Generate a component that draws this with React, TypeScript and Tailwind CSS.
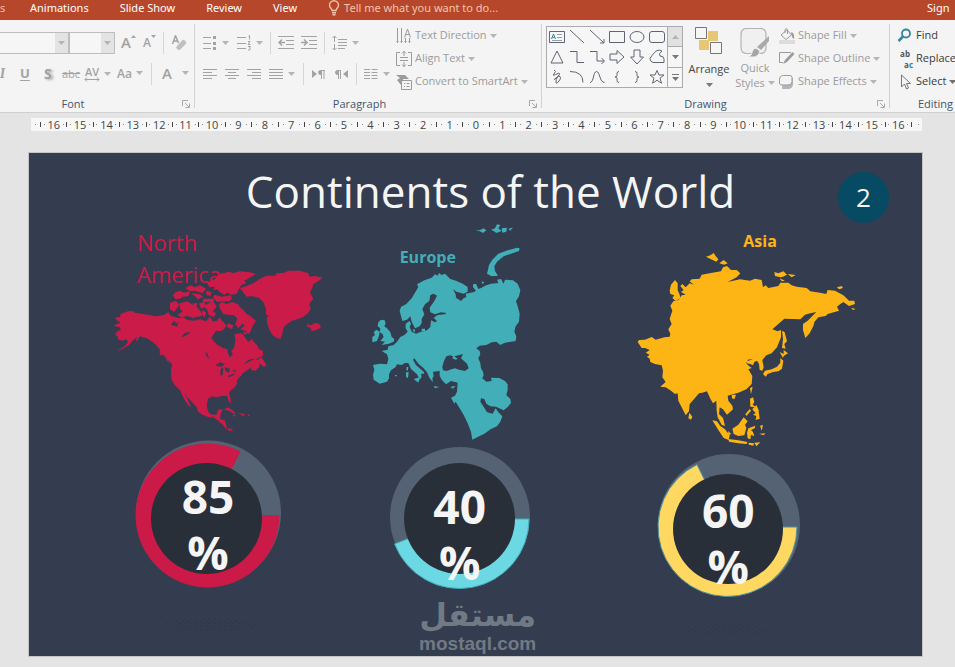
import React from 'react'
import clsx from 'clsx'

type Props = { children?: React.ReactNode; className?: string }

const Caret = ({ className }: Props): React.JSX.Element => (
  <svg viewBox="0 0 7 4" className={clsx('h-1 w-[7px] shrink-0 fill-current', className)} aria-hidden="true">
    <path d="M0 0h7L3.5 4z" />
  </svg>
)

const Icon = ({ children, className }: Props): React.JSX.Element => (
  <svg
    viewBox="0 0 16 16"
    className={clsx('h-4 w-4 shrink-0', className)}
    fill="none"
    stroke="currentColor"
    aria-hidden="true"
  >
    {children}
  </svg>
)

const Separator = ({ className }: Props): React.JSX.Element => (
  <span className={clsx('h-[22px] w-px shrink-0 bg-[#d6d6d6]', className)} />
)

type ToolProps = Props & { label: string; caret?: boolean }

const Tool = ({ label, caret, children, className }: ToolProps): React.JSX.Element => (
  <button
    type="button"
    aria-label={label}
    className={clsx('flex shrink-0 items-center text-[#a3a3a3]', caret && 'gap-1', className)}
  >
    {children}
    {caret && <Caret className="text-[#b4b4b4]" />}
  </button>
)

type TextToolProps = Props & { text: string; caret?: boolean }

const TextTool = ({ text, caret, children, className }: TextToolProps): React.JSX.Element => (
  <button type="button" className={clsx('flex h-[23px] items-center gap-[3px] whitespace-nowrap', className)}>
    {children}
    <span>{text}</span>
    {caret && <Caret className="opacity-70" />}
  </button>
)

type GroupProps = Props & { title: string; launcher?: boolean }

const Group = ({ title, launcher, children, className }: GroupProps): React.JSX.Element => (
  <section aria-label={title} className={clsx('flex shrink-0 flex-col', className)}>
    <div className="flex h-[76px]">{children}</div>
    <div className="flex h-4 items-center pr-1">
      <span className="flex-1 pr-3 text-center text-[#44546a]">{title}</span>
      {launcher && (
        <button type="button" aria-label={`${title} options`} className="text-[#a9a9a9]">
          <svg viewBox="0 0 8 8" className="h-2 w-2" fill="none" stroke="currentColor" aria-hidden="true">
            <path d="M.5 6V.5H6M3 3l4 4M7.5 3.5v4h-4" />
          </svg>
        </button>
      )}
    </div>
  </section>
)

const Divider = (): React.JSX.Element => <span className="my-1 w-px shrink-0 bg-[#d2d2d2]" />

const tabs = ['Animations', 'Slide Show', 'Review', 'View']

const TabBar = (): React.JSX.Element => (
  <nav className="flex h-5 items-center overflow-hidden bg-[#b7472a] pb-1 font-['Noto_Sans','Open_Sans',sans-serif] text-white">
    <a href="#transitions" className="w-[30px] shrink-0 text-[#e9c3b3]">
      s
    </a>
    <div className="flex flex-1 items-center gap-[31px]">
      {tabs.map((tab) => (
        <a key={tab} href={`#${tab}`} className="whitespace-nowrap">
          {tab}
        </a>
      ))}
      <button type="button" className="flex items-center gap-1 whitespace-nowrap text-[#f3c3ab]">
        <svg viewBox="0 0 12 16" className="h-4 w-3" fill="none" stroke="currentColor" strokeWidth="1.4" aria-hidden="true">
          <path d="M4 10.5C4 8.500 1.500 8 1.500 5.200a4.500 4.500 0 0 1 9 0C10.500 8 8 8.500 8 10.500zM4 12.700h4M4.500 14.800h3" />
        </svg>
        Tell me what you want to do...
      </button>
    </div>
    <a href="#signin" className="w-7 shrink-0 whitespace-nowrap">
      Sign
    </a>
  </nav>
)

const FontGroup = (): React.JSX.Element => (
  <Group title="Font" launcher className="-ml-6 w-[218px]">
    <div className="flex flex-col pt-[7px] pl-6">
      <div className="flex h-[31px] items-center">
        <div className="relative h-[22px] w-[69px] border border-l-0 border-[#bdbdbd]">
          <select aria-label="Font name" className="h-full w-full appearance-none bg-[#f6f6f6]" />
          <span className="pointer-events-none absolute inset-y-0 right-0 flex w-[13px] items-center justify-center bg-[#e3e3e3] text-[#b4b4b4]">
            <Caret />
          </span>
        </div>
        <div className="relative h-[22px] w-[46px] border border-[#bdbdbd]">
          <select aria-label="Font size" className="h-full w-full appearance-none bg-[#f6f6f6]" />
          <span className="pointer-events-none absolute inset-y-0 right-0 flex w-[13px] items-center justify-center bg-[#e3e3e3] text-[#b4b4b4]">
            <Caret />
          </span>
        </div>
        <div className="flex items-center gap-[7px] pl-1.5">
          <Tool label="Increase font size">
            <span className="text-[15px] font-semibold">A</span>
            <svg viewBox="0 0 5 3" className="mb-3 h-[3px] w-[5px] fill-current" aria-hidden="true">
              <path d="M0 3h5L2.500 0z" />
            </svg>
          </Tool>
          <Tool label="Decrease font size">
            <span className="text-[12px] font-semibold">A</span>
            <svg viewBox="0 0 5 3" className="mb-3 h-[3px] w-[5px] fill-current" aria-hidden="true">
              <path d="M0 0h5L2.500 3z" />
            </svg>
          </Tool>
          <Separator />
          <Tool label="Clear formatting">
            <Icon>
              <path d="M1.500 9L4.500.800 7.500 8M3 6h3.500" strokeWidth="1.500" />
              <path d="M5.500 11.500l6-6.500q1-.8 2 .2l1.500 1.500q.8 1 0 2l-6 6q-1 .8-2 0l-1.500-1.500q-.8-.9 0-1.700z" fill="#c0c0c0" stroke="none" />
            </Icon>
          </Tool>
        </div>
      </div>
      <div className="flex h-[31px] items-center text-sm">
        <Tool label="Italic" className="w-5">
          <i className="font-serif font-bold">I</i>
        </Tool>
        <Tool label="Underline" className="w-6">
          <span className="text-[13px] font-bold underline underline-offset-2">U</span>
        </Tool>
        <Tool label="Text shadow" className="w-[18px]">
          <b className="drop-shadow-[2px_1px_1px_#aaa]">S</b>
        </Tool>
        <Tool label="Strikethrough" className="w-[22px]">
          <span className="text-[11px] line-through">abc</span>
        </Tool>
        <Tool label="Character spacing" caret>
          <span className="flex flex-col items-center">
            <span className="text-[11px] leading-[11px] font-semibold">AV</span>
            <svg viewBox="0 0 16 5" className="h-[5px] w-4" fill="none" stroke="currentColor" aria-hidden="true">
              <path d="M1 2.500h14M3 .5l-2 2 2 2M13 .5l2 2-2 2" />
            </svg>
          </span>
        </Tool>
        <Tool label="Change case" caret className="ml-1.5">
          <span className="text-[12px] font-semibold">Aa</span>
        </Tool>
        <Separator className="mx-2" />
        <Tool label="Font colour" caret className="ml-0.5">
          <span className="w-4 text-left text-[15px] font-semibold">A</span>
        </Tool>
      </div>
    </div>
  </Group>
)

const ParagraphGroup = (): React.JSX.Element => (
  <Group title="Paragraph" launcher className="w-[346px] pl-[7px]">
    <div className="flex w-[194px] shrink-0 flex-col pt-[7px]">
      <div className="flex h-[31px] items-center gap-[7px]">
        <Tool label="Bullets" caret>
          <Icon>
            <path d="M1 2.500h8M1 8.500h8M1 13.500h8" />
            <path d="M11 1h3v3h-3zM11 7h3v3h-3zM11 12h3v3h-3z" fill="currentColor" stroke="none" />
          </Icon>
        </Tool>
        <Tool label="Numbering" caret>
          <Icon>
            <path d="M1 2.500h9M1 8.500h9M1 13.500h9M12.500 1l1-.5v4M12 6.500h2l-2 3h2.500M12 11.500h2.500l-1 1.500q1.500.5 0 2h-1.500" />
          </Icon>
        </Tool>
        <Separator />
        <Tool label="Decrease indent">
          <Icon>
            <path d="M0 1.500h16M8 5.500h8M8 9.500h8M0 13.500h16" />
            <path d="M7 7.500H1M4 4.500l-3 3 3 3" strokeWidth="1.500" />
          </Icon>
        </Tool>
        <Tool label="Increase indent">
          <Icon>
            <path d="M0 1.500h16M8 5.500h8M8 9.500h8M0 13.500h16" />
            <path d="M0 7.500h6M3 4.500l3 3-3 3" strokeWidth="1.500" />
          </Icon>
        </Tool>
        <Separator />
        <Tool label="Line spacing" caret>
          <Icon>
            <path d="M6 4.500h9M6 7.500h9M6 10.500h9M6 13.500h7M2.500 1v6M.5 3l2-2 2 2M2.500 9v6M.5 13l2 2 2-2" />
          </Icon>
        </Tool>
      </div>
      <div className="flex h-[31px] items-center gap-1.5">
        <Tool label="Align left">
          <Icon>
            <path d="M1 3.500h14M1 6.500h9M1 9.500h14M1 12.500h9" />
          </Icon>
        </Tool>
        <Tool label="Center">
          <Icon>
            <path d="M1 3.500h14M4 6.500h8M1 9.500h14M4 12.500h8" />
          </Icon>
        </Tool>
        <Tool label="Align right">
          <Icon>
            <path d="M1 3.500h14M6 6.500h9M1 9.500h14M6 12.500h9" />
          </Icon>
        </Tool>
        <Tool label="Justify" caret>
          <Icon>
            <path d="M1 3.500h14M1 6.500h14M1 9.500h14M1 12.500h14" />
          </Icon>
        </Tool>
        <Separator className="mx-0.5" />
        <Tool label="Left to right">
          <Icon>
            <path d="M0 4l5 4-5 4z" fill="currentColor" stroke="none" />
            <path d="M13 4.500H8.500a2 2 0 0 0 0 4H9V4.500zM9.500 4v9M12 4v9" fill="currentColor" />
          </Icon>
        </Tool>
        <Tool label="Right to left">
          <Icon>
            <path d="M14 4L9 8l5 4z" fill="currentColor" stroke="none" />
            <path d="M7 4.500H3.500a2 2 0 0 0 0 4H4V4.500zM4.500 4v9M6.500 4v9" fill="currentColor" />
          </Icon>
        </Tool>
        <Separator />
        <Tool label="Columns" caret>
          <Icon>
            <path d="M1 3.500h6M1 6.500h6M1 9.500h6M1 12.500h6M8.500 3.500h6M8.500 6.500h6M8.500 9.500h6M8.500 12.500h6" />
          </Icon>
        </Tool>
      </div>
    </div>
    <div className="flex flex-col items-start pt-1 text-[#9b9b9b]">
      <TextTool text="Text Direction" caret>
        <Icon>
          <path d="M1.500 0v15M5.500 0v15M9.500 10v5M13.500 10v5M.5 13.500h2M4.500 13.500h2M8.500 13.500h2M12.500 13.500h2M8.500 9.500L11.500 1l3 8.500M9.500 6.500h4" />
        </Icon>
      </TextTool>
      <TextTool text="Align Text" caret>
        <Icon>
          <path d="M4 1.500H.5v13H4M12 1.500h3.500v13H12M4 6.500h8M4 9.500h8M8 0v5M6 2.500l2-2 2 2M8 11v5M6 13.500l2 2 2-2" />
        </Icon>
      </TextTool>
      <TextTool text="Convert to SmartArt" caret>
        <Icon>
          <path d="M0 1h9l4 4H7v2H5v4L1 6l3-2z" fill="currentColor" stroke="none" />
          <path d="M5.500 6.500h10v9h-10zM8 9.500h1M10.500 9.500h3M8 12.500h1M10.500 12.500h3" />
        </Icon>
      </TextTool>
    </div>
  </Group>
)

const shapes: { name: string; d: string }[] = [
  { name: 'Line', d: 'M1 1l14 13' },
  { name: 'Arrow', d: 'M1 1l14 13M15 10v4h-4' },
  { name: 'Rectangle', d: 'M.5 2.500h15v11H.5z' },
  { name: 'Oval', d: 'M1 8a7 5.500 0 1 0 14 0a7 5.500 0 1 0-14 0' },
  { name: 'Rounded rectangle', d: 'M3 2.500h10a2.500 2.500 0 0 1 2.500 2.500v6a2.500 2.500 0 0 1-2.500 2.500H3A2.500 2.500 0 0 1 .5 11V5A2.500 2.500 0 0 1 3 2.500z' },
  { name: 'Triangle', d: 'M8 2l6 12H2z' },
  { name: 'Elbow connector', d: 'M1 2.500h7v11h7' },
  { name: 'Elbow arrow', d: 'M1 2.500h7v9.500h7M12.500 9l3 3-3 3' },
  { name: 'Right arrow', d: 'M1 5h7V1.500L15 8l-7 6.500V11H1z' },
  { name: 'Down arrow', d: 'M5 1v7H1.500L8 15l6.500-7H11V1z' },
  { name: 'Freeform', d: 'M5.500 3.500L8 1.500q3-1 5 .5-4 3-2 5 4 0 4 3v3.500H4q-3-1-3-4l2-3z' },
  { name: 'Scribble', d: 'M5 1q3 1 0 4t5-1q2 1-3 5t3-2q3 1 0 5t-3 1 1-4' },
  { name: 'Arc', d: 'M1 2.500q13 0 13 11' },
  { name: 'Curve', d: 'M1 13.500c4 0 3-11 6.500-11s3 11 8 11' },
  { name: 'Left brace', d: 'M10 2.500q-2 0-2 2v2q0 1.500-2 1.500 2 0 2 1.500v2q0 2 2 2' },
  { name: 'Right brace', d: 'M6 2.500q2 0 2 2v2q0 1.500 2 1.500-2 0-2 1.500v2q0 2-2 2' },
  { name: 'Star', d: 'M8 1.500l2 4.500h5l-4 3.200 1.500 5L8 11.300 3.500 14.200l1.500-5L1 6h5z' }
]

const DrawingGroup = (): React.JSX.Element => (
  <Group title="Drawing" launcher className="w-[347px] pl-1">
    <div className="mt-1.5 flex h-[62px] shrink-0 border border-[#ababab] bg-[#f6f6f6]">
      <div className="grid grid-cols-6 text-[#5f6673]">
        <button type="button" aria-label="Text box" className="flex w-5 items-center justify-center">
          <Icon>
            <path d="M.5 2.500h15v11H.5z" />
            <path d="M2.500 10l2-5 2 5M3.500 8.500h2" stroke="#31849b" />
            <path d="M8 5.500h5M8 8.500h5M3 11.500h10" stroke="#9aa0aa" />
          </Icon>
        </button>
        {shapes.map((shape) => (
          <button key={shape.name} type="button" aria-label={shape.name} className="flex w-5 items-center justify-center">
            <Icon>
              <path d={shape.d} />
            </Icon>
          </button>
        ))}
      </div>
      <div className="flex w-[15px] flex-col divide-y divide-[#ababab] border-l border-[#ababab] text-[#777]">
        <button type="button" aria-label="Scroll up" className="flex flex-1 items-center justify-center bg-[#e1e1e1] text-[#b4b4b4]">
          <Caret className="rotate-180" />
        </button>
        <button type="button" aria-label="Scroll down" className="flex flex-1 items-center justify-center">
          <Caret />
        </button>
        <button type="button" aria-label="More shapes" className="flex flex-1 flex-col items-center justify-center gap-0.5">
          <span className="h-px w-[7px] bg-current" />
          <Caret />
        </button>
      </div>
    </div>
    <button type="button" className="flex w-[52px] flex-col items-center pt-[7px] text-[#444]">
      <svg viewBox="0 0 28 28" className="h-7 w-7" aria-hidden="true">
        <path d="M13 4h10v10H13zM4 13h10v10H4z" fill="#e8c674" />
        <path d="M.5.500h11v11H.5zM15.500 15.500h11v11h-11z" fill="#f6f6f6" stroke="#777" />
      </svg>
      <span className="pt-1.5 leading-4">Arrange</span>
      <Caret className="mt-1.5 text-[#777]" />
    </button>
    <button type="button" className="flex w-10 flex-col items-center pt-2 text-[#9b9b9b]">
      <svg viewBox="0 0 30 30" className="h-[30px] w-[30px]" fill="none" stroke="#b4b4b4" aria-hidden="true">
        <path d="M7 .5h13q6 0 6 6v13q0 6-6 6H7q-6 0-6-6v-13q0-6 6-6z" strokeWidth="1.200" fill="#f0f0f0" />
        <path d="M29 8v5l-8 9-4-3z" fill="#aaa" stroke="none" />
        <path d="M16 20l4 3q-1 5-5 6H7q5-1 5-5 1-4 4-4z" fill="#a5a5a5" stroke="#f4f4f4" />
      </svg>
      <span className="pt-0.5 leading-[15px]">Quick</span>
      <span className="flex items-center gap-[3px] leading-4">
        Styles <Caret className="opacity-70" />
      </span>
    </button>
    <div className="flex flex-col items-start pt-1 pl-1 text-[#9b9b9b]">
      <TextTool text="Shape Fill" caret>
        <Icon>
          <path d="M0 12h16v4H0z" fill="#dcdcdc" stroke="none" />
          <path d="M2 7l6-5 4.500 5L7 11.500zM6 5V1.500q1-2 2.500 0V6" />
          <path d="M12 4q4 1 3 7-2-1-2.500-4z" fill="currentColor" stroke="none" />
        </Icon>
      </TextTool>
      <TextTool text="Shape Outline" caret>
        <Icon>
          <path d="M12 1.500H.5v10H4" />
          <path d="M13.500 1L15.500 3 8 11l-4 2 2-4z" fill="currentColor" stroke="none" />
        </Icon>
      </TextTool>
      <TextTool text="Shape Effects" caret>
        <Icon>
          <path d="M5 4h9v6q0 4-4 5H3q0-4 2-11z" fill="#b4b4b4" stroke="none" />
          <path d="M4.500 1.500H11q2 0 2 2v4q0 3.500-4 3.500H3Q.5 11 .5 9V6Q.5 1.500 4.500 1.500z" fill="#f4f4f4" />
        </Icon>
      </TextTool>
    </div>
  </Group>
)

const EditingGroup = (): React.JSX.Element => (
  <Group title="Editing" className="w-[100px] pl-[7px]">
    <div className="flex flex-col items-start pt-1 text-[#3b3b3b]">
      <TextTool text="Find">
        <Icon className="text-[#31849b]">
          <circle cx="9" cy="5.500" r="4" strokeWidth="1.800" />
          <path d="M6 8.500L1.500 13" strokeWidth="2.500" />
        </Icon>
      </TextTool>
      <TextTool text="Replace">
        <span className="grid w-4 text-[8px] leading-[11px] font-bold text-[#555]" aria-hidden="true">
          <span>ab</span>
          <span className="justify-self-end">
            a<span className="text-[#31849b]">c</span>
          </span>
        </span>
      </TextTool>
      <TextTool text="Select" caret>
        <Icon className="text-[#777]">
          <path d="M4.500 1v12l3-3 2 5 2-1-2-4.500h4z" />
        </Icon>
      </TextTool>
    </div>
  </Group>
)

const marks = Array.from({ length: 33 }, (_, i) => Math.abs(16 - i))

const Dot = (): React.JSX.Element => <i className="h-px w-px bg-[#888]" />
const Tick = (): React.JSX.Element => <i className="h-[5px] w-px bg-[#444]" />

const Ruler = (): React.JSX.Element => (
  <div className="mt-[5px] mr-[33px] ml-[31px] flex h-[13px] items-center bg-[#f7f7f7] pl-1 text-[#444]">
    <Dot />
    <div className="ml-1 flex flex-1">
      {marks.map((mark, i) => (
        <div key={i} className="flex h-[13px] flex-1 items-center justify-between leading-[13px]">
          <Tick />
          <Dot />
          <span>{mark}</span>
          <Dot />
          <i />
        </div>
      ))}
    </div>
    <Tick />
    <i className="w-1.5" />
    <Dot />
    <i className="w-[3px]" />
  </div>
)

const NorthAmerica = (): React.JSX.Element => (
  <svg viewBox="36 126 636 504" className="-mt-6 ml-[83px] h-[168px] w-[212px]" fill="#cb1a48" aria-hidden="true">
    {/* breaks the straight edges into a ragged coastline */}
    <filter id="coast" x="0" y="0" width="1" height="1">
      <feTurbulence type="fractalNoise" baseFrequency="0.2" numOctaves="2" seed="4" />
      <feDisplacementMap in="SourceGraphic" scale="5" xChannelSelector="R" yChannelSelector="G" />
    </filter>
    <g filter="url(#coast)">
      <path d="M62 270L84 262 100 262 104 266 118 268 130 270 168 277 190 274 205 265 212 275 236 282 250 280 262 288 285 290 300 286 318 292 330 278 338 292 352 290 358 280 372 296 380 304 372 316 362 322 348 320 338 335 334 342 340 350 352 362 368 372 382 376 384 388 390 400 398 392 394 380 402 372 406 352 404 330 425 328 432 335 440 348 446 354 456 345 462 355 470 362 478 376 488 380 490 390 485 398 470 404 452 405 440 412 432 422 445 414 465 404 472 408 484 400 492 410 500 425 490 428 478 418 478 430 466 440 452 438 455 430 440 440 428 448 424 455 412 466 410 480 404 490 392 500 387 508 392 524 393 537 386 532 382 516 368 515 350 520 335 517 324 525 320 545 325 565 335 572 350 572 354 558 368 555 362 572 360 586 374 588 378 600 380 612 392 614 400 618 392 622 378 614 368 602 355 590 340 580 326 580 308 572 294 564 290 550 276 534 262 520 254 508 262 524 272 546 268 548 256 532 246 512 240 498 224 484 214 466 213 440 216 420 204 408 198 402 190 392 182 392 180 378 168 362 152 350 140 342 128 340 120 336 116 346 108 352 110 340 96 352 88 362 76 370 60 378 50 380 62 374 74 366 84 354 80 346 66 350 52 345 54 338 46 332 52 322 62 318 60 310 40 306 52 300 62 296 52 290 44 282 60 278z" />
      <path d="M420 192L440 186 462 176 484 162 500 155 525 155 530 148 552 146 566 140 600 140 625 148 628 158 645 156 668 161 654 172 640 180 638 190 630 205 640 224 628 240 632 255 624 268 608 280 592 286 576 290 562 300 552 308 548 325 542 344 530 342 518 334 508 318 502 298 500 280 508 275 498 272 498 255 490 235 478 222 458 217 440 218 430 206z" />
      <path d="M620 300L632 304 645 297 656 298 663 308 655 316 640 321 628 318 634 312 622 308z" />
      <path d="M322 176L345 165 358 150 388 143 398 148 420 142 450 145 468 150 448 162 432 170 440 178 425 182 418 192 410 210 392 212 384 206 372 212 360 205 352 196 340 198 344 188 328 190z" />
      <path d="M342 212L366 218 392 214 396 224 388 232 351 233 340 222z" />
      <path d="M238 238L262 232 274 240 292 236 290 248 302 262 306 277 290 278 280 282 262 276 246 280 232 274 248 262 240 255z" />
      <path d="M210 236L228 230 238 242 230 254 222 264 210 256z" />
      <path d="M218 212L228 204 240 200 252 206 270 202 266 216 248 218 240 224 226 226zM256 192L272 184 284 190 300 184 318 194 308 208 284 200 270 202zM274 208L296 210 312 218 294 226zM318 200L334 204 332 216 320 214zM320 240L340 232 350 248 338 262 348 268 342 280 326 272 322 258 314 250zM296 238L314 234 318 248 304 254zM308 224L342 224 340 234 310 234zM308 258L318 266 314 280 304 270z" />
      <path d="M356 242L366 234 380 240 396 234 414 240 420 250 432 260 440 270 452 276 468 292 460 302 452 320 448 330 436 320 420 316 434 305 428 298 424 304 414 312 406 300 412 284 402 274 385 272 370 270 360 254zM384 298L400 304 396 316 380 308zM430 322L446 328 432 332z" />
      <path d="M372 556L384 550 402 562 408 574 390 562zM416 568L436 570 430 577zM443 571L451 574 444 577zM398 573h8v4h-8zM178 380L188 396 180 392zM196 400L212 418 202 412z" />
      <g fill="#333d4f">
        <path d="M346 425L360 415 374 420 366 428 352 426zM362 436L370 430 368 452 361 455zM374 430L390 434 386 446 376 440zM382 456L404 448 402 453 388 459zM396 440L408 438 406 443zM316 384L322 388 327 404 320 398zM212 300L225 292 226 296 240 296 232 300 234 308 218 304zM243 338L256 326 272 324 262 332 250 338z" />
      </g>
    </g>
  </svg>
)

const Europe = (): React.JSX.Element => (
  <svg viewBox="30 21 453 657" className="ml-11 h-[219px] w-[151px]" fill="#42aeb8" aria-hidden="true">
    <path d="M116 288L120 275 135 268 152 250 165 228 172 216 168 208 190 196 212 188 222 178 230 182 234 174 242 180 252 176 262 186 268 192 285 197 305 206 320 216 320 230 308 236 286 230 276 222 284 238 285 248 300 258 308 250 316 246 314 236 336 232 345 228 336 216 336 208 345 206 352 222 362 218 372 212 390 206 412 204 408 194 420 192 428 206 432 194 456 196 470 206 478 226 474 244 465 258 470 274 476 296 474 320 464 334 460 350 466 364 464 378 450 380 430 384 418 390 406 380 392 382 376 390 356 392 346 400 356 408 358 418 352 430 358 445 360 460 366 470 368 480 364 490 376 500 392 498 390 488 415 489 432 498 440 508 440 525 436 540 448 552 450 564 440 576 428 586 415 580 405 575 388 574 376 566 370 552 360 550 358 560 368 575 378 592 395 596 404 580 412 592 424 604 418 620 408 634 390 642 370 656 350 666 334 674 330 650 320 625 308 600 296 580 284 560 280 566 270 548 282 542 288 530 290 503 270 498 255 508 242 494 236 482 236 468 216 470 218 484 214 490 216 502 206 490 198 472 188 460 172 446 160 430 156 434 165 450 188 470 190 476 180 476 182 486 176 494 168 478 150 462 142 444 132 444 122 450 108 448 104 456 90 466 84 478 84 490 78 500 56 506 38 494 36 480 40 464 36 450 56 446 78 448 82 432 78 418 62 408 80 404 82 394 98 390 108 380 118 366 130 360 140 350 134 340 134 326 146 318 150 326 146 336 152 350 165 356 180 350 198 346 208 336 210 316 222 322 228 318 218 308 230 300 252 298 256 294 240 292 222 298 208 292 206 278 220 258 228 242 218 236 208 240 205 258 192 268 184 282 190 298 182 312 182 324 176 334 162 340 152 320 148 304 138 314 124 318z" />
    <path d="M52 322L58 316 70 314 74 325 70 334 78 340 88 352 92 366 100 372 98 380 84 386 62 390 72 380 58 378 68 366 64 356 56 352 58 340 50 334z" />
    <path d="M34 366L42 360 38 352 46 344 56 350 54 362 48 378 34 382z" />
    <path d="M380 168L384 150 394 134 412 116 440 106 468 98 476 100 474 108 450 116 428 124 408 140 400 154 402 168 411 182 392 184 378 176z" />
    <path d="M343 44L356 46 368 40 376 46 366 54 360 50zM390 44L402 40 408 28 418 30 412 40 422 48 406 54 398 48zM422 40L438 38 436 50 424 53zM442 42L456 37 448 47zM362 199L370 202 364 208zM158 492L177 487 172 503zM135 472L143 472 141 489 135 486zM137 456L142 456 140 468 136 464zM218 513L235 516 222 520zM268 516L284 512 276 521zM102 480h5v4h-5zM154 343L163 344 160 353zM182 341h10v7h-10z" />
    <path fill="#333d4f" d="M248 440L256 424 268 421 276 424 274 430 284 434 290 432 280 424 306 417 300 430 318 446 323 460 312 468 294 464 282 460 266 464 258 468 246 466 244 455z" />
  </svg>
)

const Asia = (): React.JSX.Element => (
  <svg viewBox="36 84 660 588" className="ml-[13px] h-[196px] w-[220px]" fill="#fdb515" aria-hidden="true">
    <path d="M38 354L42 348 60 347 80 339 92 347 118 340 134 338 136 330 130 316 140 300 134 285 142 260 136 245 145 232 160 228 170 214 182 212 168 204 176 198 166 186 172 180 182 190 194 178 206 182 194 172 200 166 224 164 230 152 262 146 288 142 294 130 306 126 318 138 335 138 346 148 335 160 308 174 345 166 375 170 390 164 410 168 414 190 422 184 430 192 460 186 466 176 490 176 500 184 515 188 545 192 556 202 585 206 604 210 608 198 630 200 655 214 672 230 688 230 690 240 672 246 655 234 646 240 636 248 642 260 608 270 602 276 580 280 568 294 566 304 554 328 541 342 534 318 534 300 548 290 574 264 556 268 540 272 526 286 478 284 442 316 458 322 468 318 468 340 456 370 440 388 424 394 412 408 416 430 412 440 404 438 402 420 396 410 388 414 384 424 376 420 364 418 368 412 384 404 366 408 372 412 362 416 372 426 380 432 370 436 382 456 380 480 364 496 340 506 318 512 308 515 310 530 322 545 324 556 306 572 294 556 284 550 282 570 294 582 300 606 290 602 278 580 275 560 274 530 264 538 256 524 246 502 232 506 222 508 208 524 194 540 192 562 182 574 170 550 160 530 158 508 150 510 138 500 122 490 106 488 122 474 112 460 114 440 110 424 90 420 76 414 74 404 66 398 74 392 62 386 74 378 60 372 50 372z" />
    <path d="M134 200L138 182 150 168 158 178 158 198 164 212 166 222 152 231 142 222 148 214 136 210zM243 98L256 94 266 87 272 96 280 106 274 113 258 106zM283 118L296 108 308 118 298 122zM448 144L460 148 475 142 486 152 474 158 466 160 450 156zM488 150L512 153 500 160zM464 163L480 170 470 172zM636 190L650 186 654 192 642 196zM678 251L692 255 684 258z" />
    <path d="M471 320L479 325 486 352 478 360 482 374 471 372 474 345zM464 384L476 390 476 378 489 388 476 396 474 402zM466 402L475 410 471 434 460 442 444 444 428 450 422 458 414 450 420 440 440 436 456 428 466 416zM375 492L383 488 378 511zM320 512L333 512 328 526 321 523zM193 566L202 578 198 587 190 583z" />
    <path d="M375 524L384 520 388 534 383 542 394 550 376 548zM382 556L394 543 402 560 392 568zM384 572L401 562 404 584 392 588 394 576zM374 555L378 560 364 576 361 571zM322 614L340 602 356 580 368 592 360 602 364 612 358 634 340 636 326 630zM262 589L276 592 286 606 300 616 314 634 311 648 296 642 280 618zM310 645L340 649 367 654 365 660 340 658 312 653zM370 656L387 658 385 665 372 662zM388 656L406 655 394 667zM370 613L391 605 389 613 378 618 384 624 388 637 378 632 376 646 368 643 366 626zM405 605L414 603 410 620zM402 629L421 628 416 634zM309 621L319 630 311 633z" />
  </svg>
)

type Disc = { cx: number; cy: number; r: number }

type GaugeProps = {
  value: string
  viewBox: string
  color: string
  edge: string
  track: Disc
  fill: Disc
  hole: Disc
  sweep: number
  className: string
}

const Gauge = ({ value, viewBox, color, edge, track, fill, hole, sweep, className }: GaugeProps): React.JSX.Element => {
  // sweep runs clockwise from three o'clock
  const angle = (sweep * Math.PI) / 180
  const x = fill.cx + fill.r * Math.cos(angle)
  const y = fill.cy + fill.r * Math.sin(angle)
  const large = sweep > 180 ? 1 : 0

  return (
    <div className={clsx('relative h-[148px] w-[150px]', className)}>
      <svg viewBox={viewBox} className="h-full w-full overflow-visible" aria-hidden="true">
        <circle {...track} fill="#556273" />
        <path
          d={`M${fill.cx} ${fill.cy}H${fill.cx + fill.r}A${fill.r} ${fill.r} 0 ${large} 1 ${x} ${y}z`}
          fill={color}
          stroke={edge}
        />
        <circle {...hole} fill="#292f39" />
      </svg>
      <p className="absolute inset-x-0 top-[29px] text-center text-[46px] leading-[56px] font-bold text-[#f5f5f5]">
        {value}
        <br />%
      </p>
    </div>
  )
}

const Shadow = ({ className }: Props): React.JSX.Element => (
  <svg viewBox="0 0 98 12" className={clsx('h-3 w-[98px]', className)} aria-hidden="true">
    <defs>
      <pattern id="grain" width="6" height="4" patternUnits="userSpaceOnUse">
        <path d="M0 0h1v1H0zM3 2h1v1H3z" fill="#2a3240" />
      </pattern>
    </defs>
    <ellipse cx="49" cy="6" rx="48" ry="6" fill="url(#grain)" />
  </svg>
)

const Slide = (): React.JSX.Element => (
  <main className="mt-[21px] mr-8 ml-[28px] border border-[#c4c4c4] bg-[#333d4f] pb-px">
    <header className="relative h-[74px]">
      <h1 className="pt-[3px] pl-[30px] text-center text-[44px] leading-[70px] text-[#f5f5f5]">
        Continents of the World
      </h1>
      <span className="absolute top-[19px] right-[33px] flex h-[51px] w-[51px] items-center justify-center rounded-full bg-[#064a63] text-[26px] text-[#f5f5f5]">
        2
      </span>
    </header>
    <div className="-mt-px grid grid-cols-3">
      <section>
        <h2 className="ml-[108px] w-[100px] text-[22px] leading-8 text-[#cb1a48]">North America</h2>
        <NorthAmerica />
        <Gauge
          value="85"
          viewBox="133 439 150 148"
          color="#cb1a48"
          edge="#cb1a48"
          track={{ cx: 208.5, cy: 513, r: 72.5 }}
          fill={{ cx: 207.5, cy: 515.5, r: 71.5 }}
          hole={{ cx: 206.5, cy: 518.5, r: 55.5 }}
          sweep={297}
          className="mt-[5px] ml-[104px]"
        />
        <Shadow className="mt-8 ml-[132px]" />
      </section>
      <section className="relative">
        <h2 className="absolute top-[21px] left-[73px] text-base leading-5 font-bold text-[#42aeb8]">Europe</h2>
        <div className="-mt-1">
          <Europe />
        </div>
        <Gauge
          value="40"
          viewBox="385 449 150 148"
          color="#6cd8e4"
          edge="#42aeb8"
          track={{ cx: 460, cy: 517, r: 70 }}
          fill={{ cx: 459.5, cy: 519, r: 69.5 }}
          hole={{ cx: 459.5, cy: 518.5, r: 55.5 }}
          sweep={159}
          className="mt-2 ml-[58px]"
        />
        <footer className="ml-[93px] flex w-[116px] flex-col items-center text-[#717985]">
          <span lang="ar" dir="rtl" className="font-['DejaVu_Sans'] text-[32px] leading-9 font-bold">
            مستقل
          </span>
          <span className="font-['Liberation_Sans'] text-[19px] leading-[22px] font-bold">mostaql.com</span>
        </footer>
      </section>
      <section>
        <h2 className="ml-[119px] pt-1 text-base leading-[22px] font-bold text-[#fdb515]">Asia</h2>
        <Asia />
        <Gauge
          value="60"
          viewBox="653 453 150 148"
          color="#ffd862"
          edge="#4a90a0"
          track={{ cx: 729, cy: 525, r: 71 }}
          fill={{ cx: 727.5, cy: 527, r: 69.5 }}
          hole={{ cx: 728, cy: 529, r: 55 }}
          sweep={244}
          className="mt-[5px] ml-[29px]"
        />
        <Shadow className="mt-6 ml-14 opacity-70" />
      </section>
    </div>
  </main>
)

const App = (): React.JSX.Element => (
  <div className="min-h-screen overflow-hidden bg-[#e4e4e4] font-['Open_Sans','Noto_Sans',sans-serif] text-[11px]">
    <TabBar />
    <div className="flex overflow-hidden border-b border-[#d0d0d0] bg-[#f4f4f4]">
      <FontGroup />
      <Divider />
      <ParagraphGroup />
      <Divider />
      <DrawingGroup />
      <Divider />
      <EditingGroup />
    </div>
    <Ruler />
    <Slide />
  </div>
)

export default App
